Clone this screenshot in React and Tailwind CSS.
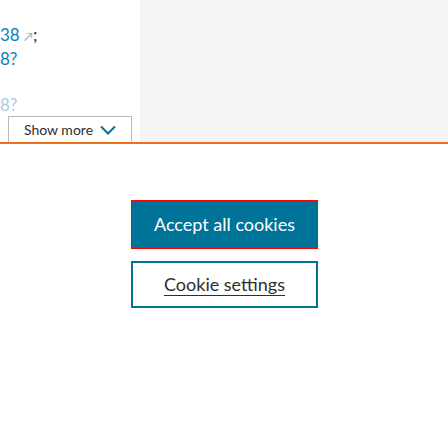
const ChevronDown = () => (
  <svg width="16" height="10" viewBox="0 0 16 10" fill="none">
    <path d="M1 1.5l7 7 7-7" stroke="#007398" strokeWidth="2" />
  </svg>
)

export default function App() {
  return (
    <div className="w-[448px] h-[448px] bg-white overflow-hidden" style={{ fontFamily: 'Lato, "Open Sans", Arial, sans-serif' }}>
      <div className="flex h-[142px]">
        <div className="w-[140px] flex flex-col overflow-hidden">
          <div className="pt-[24px] text-[17px] leading-[22px] text-[#0c7dbb] whitespace-nowrap">
            <div>
              38 <span className="text-[12px] text-[#8aa9bd]">↗</span><span className="text-[#2e2e2e]">;</span>
            </div>
            <div>8?</div>
            <div className="mt-[24px] text-[#a7cde6]">8?</div>
          </div>
          <div className="ml-[8px] w-[124px] flex-1 border border-b-0 border-[#b9b9b9] flex items-start justify-center gap-[7px] pt-[2px]">
            <span className="text-[14px] text-[#2e2e2e]">Show more</span>
            <span className="pt-[6px]"><ChevronDown /></span>
          </div>
        </div>
        <div className="flex-1 bg-[#f4f4f4]" />
      </div>
      <div className="h-[2px] bg-[#e9711c]" />
      <div className="pl-[131px] pt-[56px] flex flex-col gap-[12px]">
        <button className="w-[187px] h-[49px] bg-[#007398] border border-[#ff0000] text-white text-[18px]">
          Accept all cookies
        </button>
        <button className="w-[187px] h-[47px] bg-white border-2 border-[#007398] text-[#2e2e2e] text-[18px] underline underline-offset-[4px]">
          Cookie settings
        </button>
      </div>
    </div>
  )
}
